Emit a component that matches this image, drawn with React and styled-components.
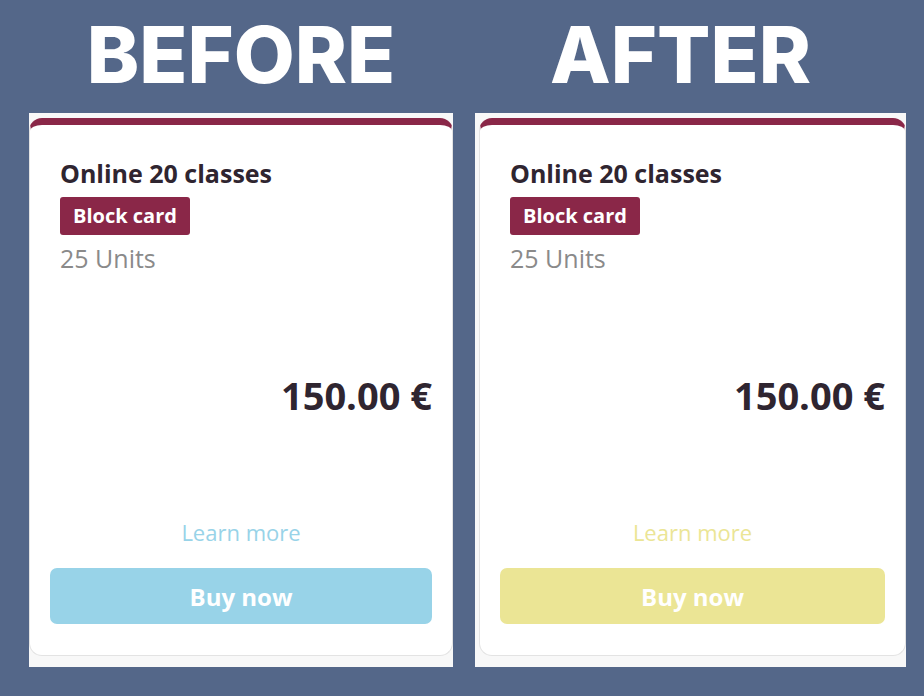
import React from "react";
import styled, { createGlobalStyle } from "styled-components";

const GlobalStyle = createGlobalStyle`
  html, body {
    margin: 0;
    padding: 0;
    background: #546789;
  }
  body {
    font-family: "Open Sans", "Liberation Sans", sans-serif;
  }
  * { box-sizing: border-box; }
`;

const Page = styled.div`
  display: grid;
  grid-template-columns: 424px 431px;
  column-gap: 22px;
  padding-left: 29px;
  width: 924px;
  height: 696px;
`;

const Column = styled.section`
  display: flex;
  flex-direction: column;
`;

const Heading = styled.h1`
  margin: 0;
  height: 113px;
  padding-top: 14px;
  padding-right: ${(p) => p.$shift || 0}px;
  font-family: Inter, "Open Sans", sans-serif;
  font-weight: 800;
  font-size: 79px;
  line-height: 80px;
  color: #ffffff;
  text-align: center;
  letter-spacing: 0;
`;

const Frame = styled.div`
  background: #f8f8f8;
  height: 554px;
  padding: 5px 0 11px ${(p) => p.$inset || 0}px;
  display: flex;
`;

const Card = styled.article`
  flex: 1;
  height: 538px;
  background: #ffffff;
  border: 1px solid #e3e3e3;
  border-top: 7px solid #8a2748;
  border-radius: 13px;
  padding: 32px 20px 31px;
  display: flex;
  flex-direction: column;
`;

const Header = styled.div`
  padding-left: 10px;
  display: flex;
  flex-direction: column;
  align-items: flex-start;
`;

const Title = styled.h2`
  margin: 0;
  font-size: 25px;
  line-height: 32px;
  font-weight: 700;
  color: #2f2530;
`;

const Badge = styled.span`
  margin-top: 8px;
  display: inline-block;
  background: #8a2748;
  color: #ffffff;
  font-size: 20px;
  line-height: 28px;
  font-weight: 700;
  padding: 5px 13px;
  border-radius: 3px;
`;

const Units = styled.div`
  margin-top: 6px;
  font-size: 25px;
  line-height: 34px;
  color: #8a8a8a;
`;

const Price = styled.div`
  margin-top: 94px;
  text-align: right;
  font-size: 38px;
  line-height: 52px;
  font-weight: 700;
  color: #2f2530;
`;

const LearnMore = styled.a`
  margin-top: auto;
  text-align: center;
  font-size: 22px;
  line-height: 30px;
  color: ${(p) => p.$accent};
  text-decoration: none;
`;

const BuyButton = styled.button`
  margin-top: 21px;
  height: 56px;
  width: 100%;
  border: none;
  border-radius: 7px;
  background: ${(p) => p.$accent};
  color: #ffffff;
  font-family: "Open Sans", "Liberation Sans", sans-serif;
  font-size: 24px;
  font-weight: 700;
  cursor: pointer;
`;

const ProductCard = ({ accent }) => (
  <Card>
    <Header>
      <Title>Online 20 classes</Title>
      <Badge>Block card</Badge>
      <Units>25 Units</Units>
    </Header>
    <Price>150.00 €</Price>
    <LearnMore $accent={accent}>Learn more</LearnMore>
    <BuyButton $accent={accent}>Buy now</BuyButton>
  </Card>
);

export default function App() {
  return (
    <>
      <GlobalStyle />
      <Page>
        <Column>
          <Heading>BEFORE</Heading>
          <Frame>
            <ProductCard accent="#98d3e8" />
          </Frame>
        </Column>
        <Column>
          <Heading $shift={20}>AFTER</Heading>
          <Frame $inset={4}>
            <ProductCard accent="#ebe595" />
          </Frame>
        </Column>
      </Page>
    </>
  );
}
